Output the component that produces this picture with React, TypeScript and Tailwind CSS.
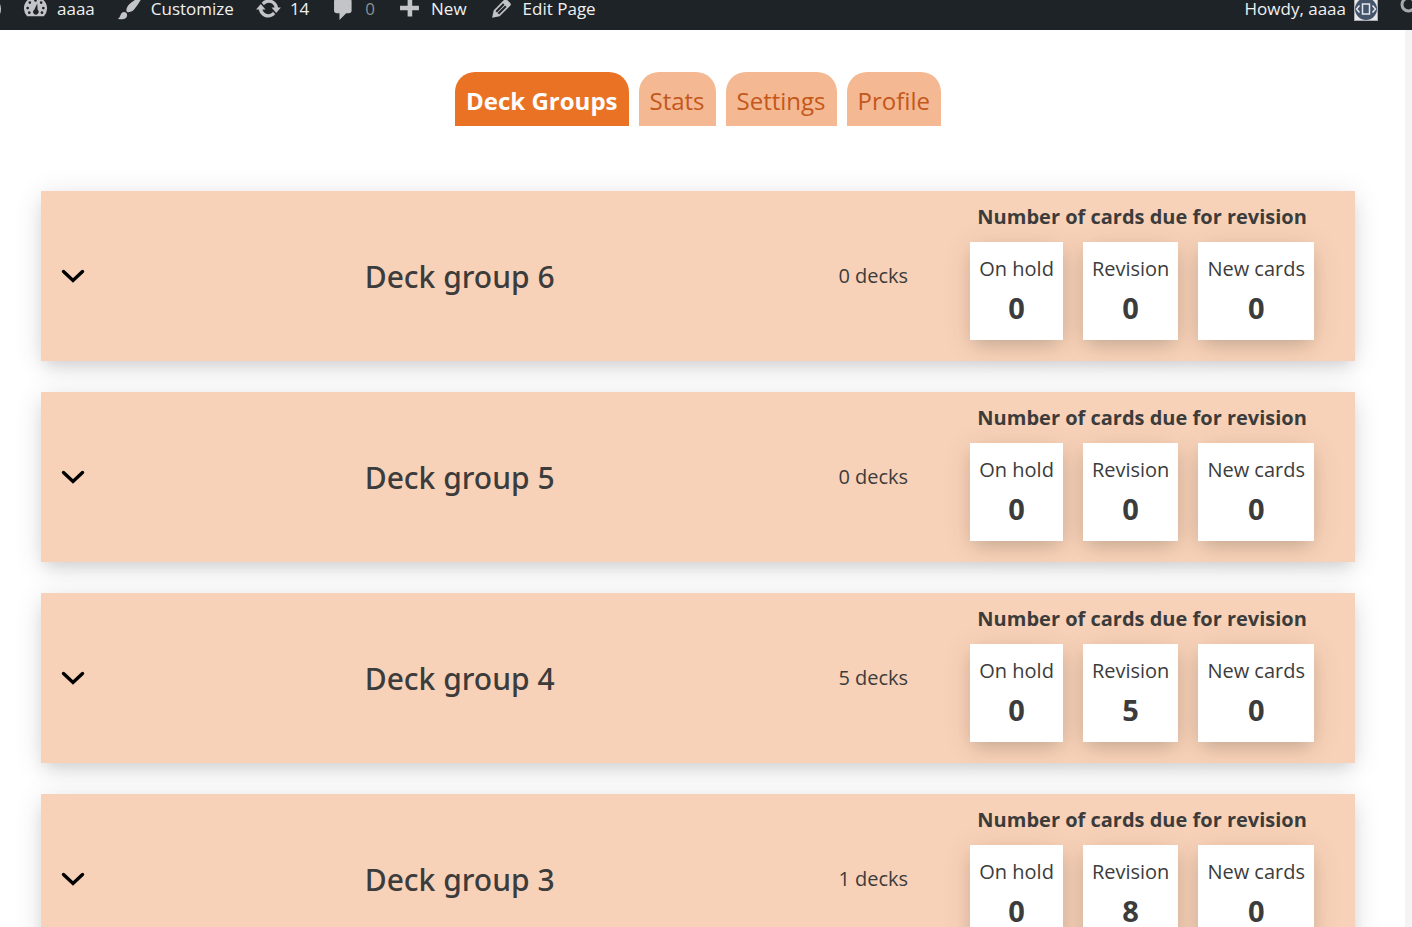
import type { ReactNode } from "react";

const tabs = ["Deck Groups", "Stats", "Settings", "Profile"];

const groups = [
  { name: "Deck group 6", decks: 0, onHold: 0, revision: 0, fresh: 0 },
  { name: "Deck group 5", decks: 0, onHold: 0, revision: 0, fresh: 0 },
  { name: "Deck group 4", decks: 5, onHold: 0, revision: 5, fresh: 0 },
  { name: "Deck group 3", decks: 1, onHold: 0, revision: 8, fresh: 0 },
];

const icons = {
  dashboard:
    "M3.8 15.7h12.4A8.6 8.6 0 0 0 18.6 10C18.6 5.3 14.8 1.4 10 1.4S1.4 5.3 1.4 10A8.6 8.6 0 0 0 3.8 15.7zM10 3a1 1 0 1 1 0 2 1 1 0 0 1 0-2zM5.8 4.6a1 1 0 1 1 0 2 1 1 0 0 1 0-2zM14.2 4.6a1 1 0 1 1 0 2 1 1 0 0 1 0-2zM4.2 8.7a1 1 0 1 1 0 2 1 1 0 0 1 0-2zM15.8 8.7a1 1 0 1 1 0 2 1 1 0 0 1 0-2zM11.3 6.3l.3 4.7a2 2 0 1 1-2.5-.1zM5.4 12.1a1 1 0 1 1 0 2 1 1 0 0 1 0-2zM14.8 12.1a1 1 0 1 1 0 2 1 1 0 0 1 0-2z",
  brush:
    "M18.33 3.57s.27-.8-.31-1.36c-.53-.52-1.22-.24-1.22-.24-.61.3-5.76 3.47-7.67 5.57-.86.96-2.06 3.79-1.09 4.82.92.98 3.96-.17 4.79-1 2.06-2.06 5.21-7.17 5.5-7.79zM1.4 17.65c2.37-1.56 1.46-3.41 3.23-4.64.93-.65 2.22-.62 3.08.29.63.67.8 2.57-.16 3.46-1.57 1.45-4 1.55-6.15.89z",
  update:
    "M10.2 3.28c3.53 0 6.43 2.61 6.92 6h2.08l-3.5 4-3.5-4h2.32c-.45-1.97-2.21-3.45-4.32-3.45-1.45 0-2.73.71-3.54 1.78L4.95 5.66C6.23 4.2 8.11 3.28 10.2 3.28zm-.4 13.44c-3.52 0-6.43-2.61-6.92-6H.8c1.17-1.33 2.33-2.67 3.5-4 1.17 1.33 2.33 2.67 3.5 4H5.48c.45 1.97 2.21 3.45 4.32 3.45 1.45 0 2.73-.71 3.54-1.78l1.71 1.95c-1.28 1.46-3.15 2.38-5.25 2.38z",
  comment:
    "M5 2.6h9q.82 0 1.41.59T16 4.6v7q0 .82-.59 1.41T14 13.6h-2l-5 5v-5H5q-.82 0-1.41-.59T3 11.6V4.6q0-.82.59-1.41T5 2.6z",
  plus: "M17 8v3.3h-5V16H8.6v-4.7H3V8h5.6V3H12v5z",
  edit: "M13.89 3.39l2.71 2.72c.46.46.42 1.24.03 1.64l-8.01 8.02-5.56 1.16 1.16-5.58s7.6-7.63 7.99-8.03c.39-.39 1.22-.39 1.68.07zm-2.73 2.79l-5.59 5.61 1.11 1.11 5.54-5.65zm-2.97 8.23l5.58-5.6-1.07-1.08-5.59 5.6z",
};

function BarIcon({ path }: { path: string }) {
  return (
    <svg viewBox="0 0 20 20" className="size-[27px] shrink-0 fill-[#c3c4c7]" aria-hidden="true">
      <path fillRule="evenodd" d={path} />
    </svg>
  );
}

function BarItem({ path, children }: { path: string; children: ReactNode }) {
  return (
    <a href="#" className="flex items-center gap-2">
      <BarIcon path={path} />
      {children}
    </a>
  );
}

function AdminBar() {
  return (
    <header className="flex h-[30px] items-start justify-between bg-[#1d2327] text-[17px] leading-[17px] text-[#f0f0f1]">
      <nav aria-label="Toolbar" className="flex h-[17px] items-center gap-[21px]">
        <a href="#" aria-label="About WordPress" className="flex w-px justify-end">
          <svg viewBox="0 0 26 26" className="size-[26px] shrink-0" aria-hidden="true">
            <circle cx="13.5" cy="13" r="11.5" fill="none" stroke="#c3c4c7" strokeWidth="2" />
          </svg>
        </a>
        <BarItem path={icons.dashboard}>aaaa</BarItem>
        <BarItem path={icons.brush}>Customize</BarItem>
        <BarItem path={icons.update}>14</BarItem>
        <BarItem path={icons.comment}>
          <span className="text-[#8c8f94]">0</span>
        </BarItem>
        <BarItem path={icons.plus}>New</BarItem>
        <BarItem path={icons.edit}>Edit Page</BarItem>
      </nav>
      <div className="flex h-[17px] items-center">
        <a href="#" className="flex items-center gap-2">
          Howdy, aaaa
          <svg viewBox="0 0 24 24" className="size-6" aria-hidden="true">
            <rect width="24" height="24" fill="#a9abb0" />
            <rect x="1" y="1" width="22" height="22" fill="#e8e8e8" />
            <circle cx="12" cy="12" r="11" fill="#44546a" />
            <path d="M5.5 8.5L2.5 12l3 3.5M18.5 8.5l3 3.5-3 3.5M8.5 7h7v10h-7z" fill="none" stroke="#e5e8ee" strokeWidth="1.5" />
          </svg>
        </a>
        <button type="button" aria-label="Search" className="ml-[22px] flex w-3 overflow-hidden">
          <svg viewBox="0 0 27 27" className="size-[27px] shrink-0" aria-hidden="true">
            <circle cx="8.5" cy="9.5" r="6.5" fill="none" stroke="#a7aaad" strokeWidth="3" />
          </svg>
        </button>
      </div>
    </header>
  );
}

function Count({ label, value }: { label: string; value: number }) {
  return (
    <div className="flex h-[98px] flex-col items-center bg-white px-[9px] pt-3 shadow-[0_8px_16px_-4px_rgba(0,0,0,0.13),0_4px_28px_rgba(0,0,0,0.11)]">
      <dt className="text-[20px] leading-[30px]">{label}</dt>
      <dd className="text-[29px] font-bold leading-[48px]">{value}</dd>
    </div>
  );
}

function DeckGroup({ group }: { group: (typeof groups)[number] }) {
  return (
    <article className="flex h-[170px] items-center bg-[#f8d2b8] shadow-[0_8px_16px_-4px_rgba(0,0,0,0.13),0_4px_28px_rgba(0,0,0,0.11)]">
      <button type="button" aria-label={"Expand " + group.name} className="flex w-16 justify-center">
        <svg viewBox="0 0 24 14" className="h-[14px] w-6" aria-hidden="true">
          <path d="M2.5 2.5L12 11.5l9.5-9" fill="none" stroke="#000" strokeWidth="3.4" strokeLinecap="round" />
        </svg>
      </button>
      <h2 className="flex-1 pl-2 text-center font-['Noto_Sans','Open_Sans',sans-serif] text-[30px] font-medium">
        {group.name}
      </h2>
      <p className="w-[134px] text-center text-[20px]">{group.decks} decks</p>
      <section className="flex h-full flex-col items-center pr-[41px] pl-[30px]">
        <h3 className="py-[10px] text-[20px] font-bold leading-[31px]">Number of cards due for revision</h3>
        <dl className="flex gap-5">
          <Count label="On hold" value={group.onHold} />
          <Count label="Revision" value={group.revision} />
          <Count label="New cards" value={group.fresh} />
        </dl>
      </section>
    </article>
  );
}

export default function App() {
  return (
    <div className="h-screen overflow-hidden bg-white font-['Open_Sans','Noto_Sans',sans-serif] text-[#3c3c3c]">
      <AdminBar />
      <div className="flex h-full">
        <main className="flex-1 pt-[42px] pr-[50px] pl-[41px]">
          <nav aria-label="Sections" className="flex justify-center gap-[10px]">
            {tabs.map((tab, i) => (
              <a
                key={tab}
                href="#"
                className={
                  i === 0
                    ? "flex h-[54px] items-center rounded-t-[20px] bg-[#ea7225] px-[11px] pt-1 text-[24px] font-bold text-white"
                    : "flex h-[54px] items-center rounded-t-[20px] bg-[#f4b892] px-[11px] pt-1 text-[24px] text-[#c4571a]"
                }
              >
                {tab}
              </a>
            ))}
          </nav>
          <div className="mt-[65px] flex flex-col gap-[31px]">
            {groups.map((group) => (
              <DeckGroup key={group.name} group={group} />
            ))}
          </div>
        </main>
        <div className="w-[7px] bg-[#f4f4f4]" />
      </div>
    </div>
  );
}
